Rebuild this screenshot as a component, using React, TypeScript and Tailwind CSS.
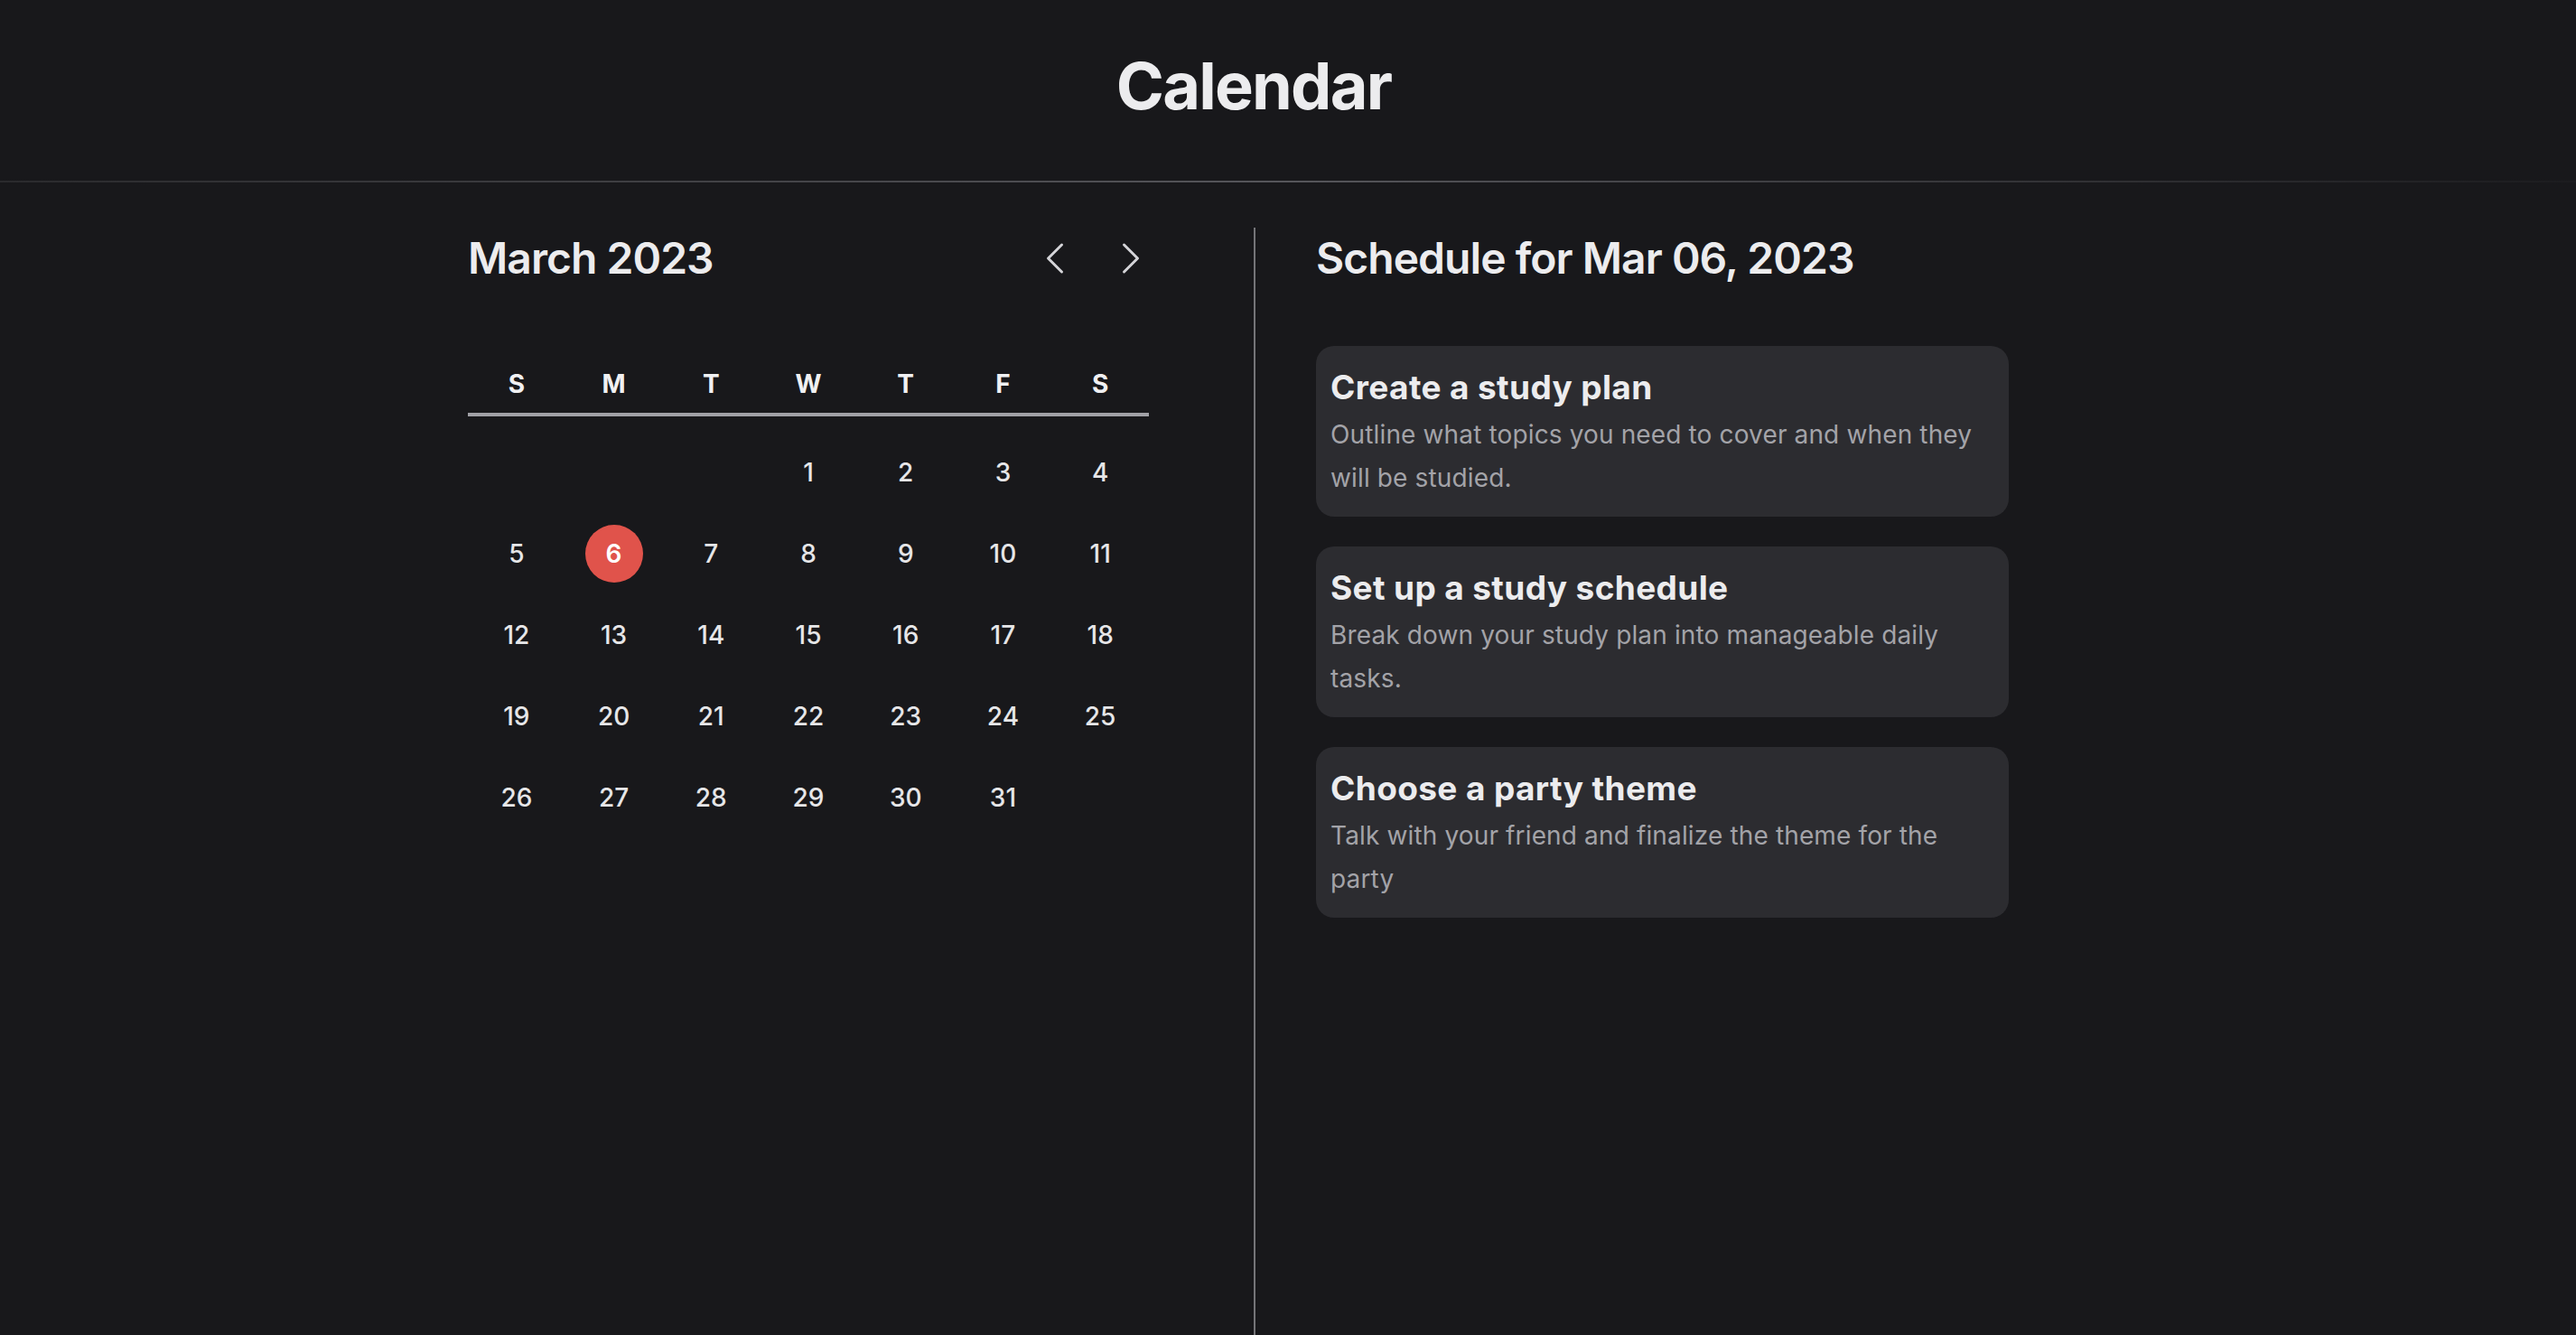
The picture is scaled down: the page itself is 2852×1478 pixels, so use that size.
import React from "react";

const days: (number | null)[] = [
  null, null, null, 1, 2, 3, 4,
  5, 6, 7, 8, 9, 10, 11,
  12, 13, 14, 15, 16, 17, 18,
  19, 20, 21, 22, 23, 24, 25,
  26, 27, 28, 29, 30, 31, null,
];

const weekdays = ["S", "M", "T", "W", "T", "F", "S"];

const events = [
  {
    title: "Create a study plan",
    desc: "Outline what topics you need to cover and when they will be studied.",
  },
  {
    title: "Set up a study schedule",
    desc: "Break down your study plan into manageable daily tasks.",
  },
  {
    title: "Choose a party theme",
    desc: "Talk with your friend and finalize the theme for the party",
  },
];

function ChevronLeft() {
  return (
    <svg viewBox="0 0 24 24" fill="none" stroke="currentColor" strokeWidth={1.5} className="w-12 h-12">
      <path strokeLinecap="round" strokeLinejoin="round" d="M15.75 19.5 8.25 12l7.5-7.5" />
    </svg>
  );
}

function ChevronRight() {
  return (
    <svg viewBox="0 0 24 24" fill="none" stroke="currentColor" strokeWidth={1.5} className="w-12 h-12">
      <path strokeLinecap="round" strokeLinejoin="round" d="m8.25 4.5 7.5 7.5-7.5 7.5" />
    </svg>
  );
}

export default function App() {
  return (
    <div className="min-h-screen flex flex-col bg-[#18181b] text-[#ececee] font-['Inter','Noto_Sans',sans-serif]">
      <header className="h-[200px] pt-[55px] pr-[76px] text-center">
        <h1 className="text-[72px] leading-[80px] font-bold tracking-[-0.025em] text-[#ececee]">Calendar</h1>
      </header>
      <div className="h-[2px] bg-gradient-to-r from-[#2a2a2d] via-[#56565b] to-[#1c1c1f]" />
      <main className="flex flex-1 pl-[518px] pt-[50px]">
        <section className="w-[754px] mr-[116px] pt-[2px]">
          <div className="flex items-center justify-between h-[64px]">
            <h2 className="text-[48px] leading-[64px] font-semibold tracking-[-0.02em]">March 2023</h2>
            <div className="flex gap-[36px] -mr-1 text-[#d4d4d8]">
              <button className="flex items-center justify-center">
                <ChevronLeft />
              </button>
              <button className="flex items-center justify-center">
                <ChevronRight />
              </button>
            </div>
          </div>
          <div className="mt-[87px] grid grid-cols-7 pb-[12px] border-b-4 border-[#a1a1a6]">
            {weekdays.map((d, i) => (
              <div key={i} className="text-center text-[28px] leading-[40px] font-bold text-[#f0f0f2]">
                {d}
              </div>
            ))}
          </div>
          <div className="mt-[17px] grid grid-cols-7">
            {days.map((d, i) => (
              <div key={i} className="h-[90px] flex items-center justify-center">
                {d === 6 ? (
                  <span className="w-[64px] h-[64px] rounded-full bg-[#e0534b] flex items-center justify-center text-[28px] font-semibold text-white">
                    {d}
                  </span>
                ) : d ? (
                  <span className="text-[28px] leading-[40px] font-medium text-[#e6e6e8]">{d}</span>
                ) : null}
              </div>
            ))}
          </div>
        </section>
        <section className="border-l-2 border-[#747478] pl-[67px] pt-[2px]">
          <h2 className="text-[48px] leading-[64px] font-semibold tracking-[-0.02em]">Schedule for Mar 06, 2023</h2>
          <div className="mt-[65px] w-[767px] flex flex-col gap-[33px]">
            {events.map((e) => (
              <div key={e.title} className="rounded-[20px] bg-[#2c2c30] px-4 pt-[18px] pb-[19px]">
                <h3 className="text-[37px] leading-[56px] font-bold tracking-[0.01em] text-[#ececee]">{e.title}</h3>
                <p className="text-[28px] leading-[48px] tracking-[0.005em] text-[#a3a3a8]">{e.desc}</p>
              </div>
            ))}
          </div>
        </section>
      </main>
    </div>
  );
}
